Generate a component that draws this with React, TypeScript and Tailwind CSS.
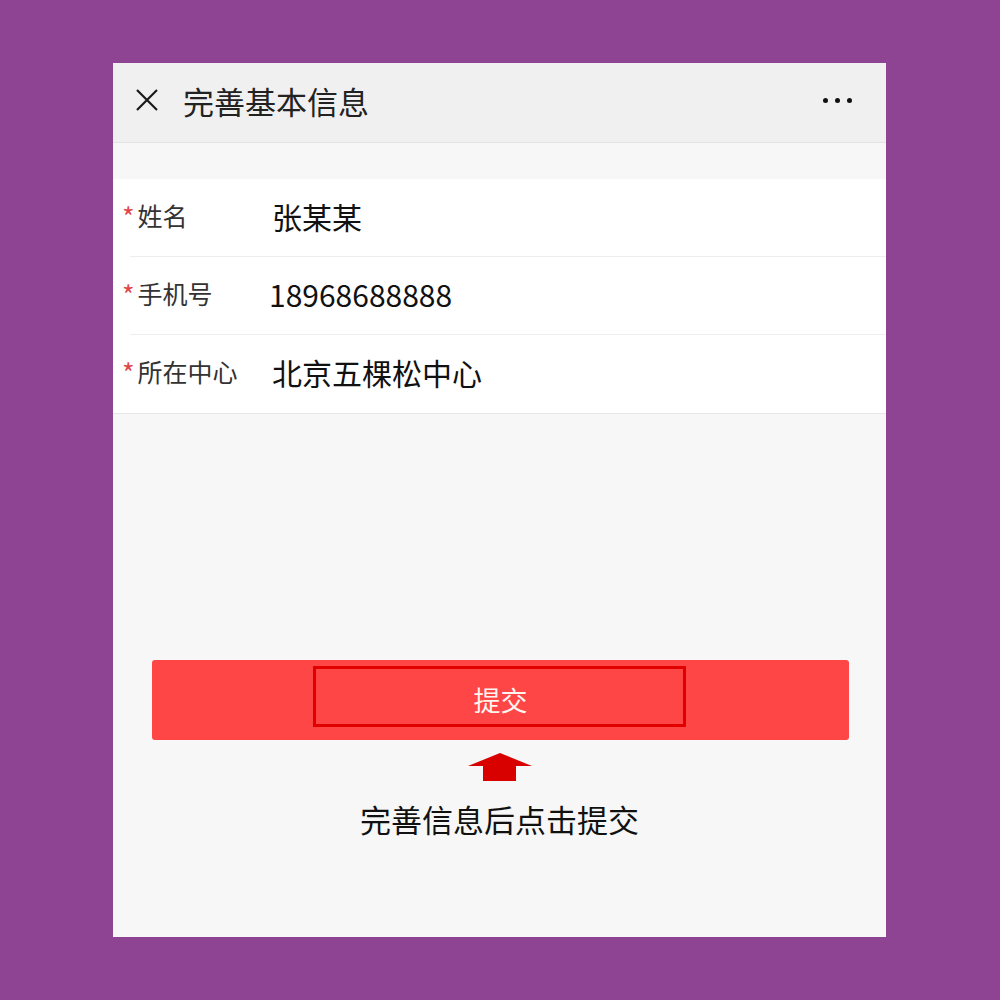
import React from "react";

const font = { fontFamily: '"Noto Sans CJK SC", "Noto Sans", sans-serif' };

function Row({ label, value, border, num }: { label: string; value: string; border: boolean; num?: boolean }) {
  return (
    <div className="relative h-[78px] flex items-center pl-[9px]">
      <div className="w-[150px] flex items-center -mt-[5px]">
        <span className="text-[#e04848] text-[27px] leading-none self-start mt-[2px] mr-[3px]">*</span>
        <span className="text-[25px] text-[#333] leading-none">{label}</span>
      </div>
      <span className={num ? "text-[30px] text-[#111] leading-none -ml-[3px] -mt-[4px]" : "text-[30px] text-[#111] leading-none -mt-[4px]"}>{value}</span>
      {border && <div className="absolute left-[17px] right-0 bottom-0 h-px bg-[#ededed]" />}
    </div>
  );
}

export default function App() {
  return (
    <div className="w-[1000px] h-[1000px] bg-[#8f4493] pt-[63px] pl-[113px]" style={font}>
      <div className="w-[773px] h-[874px] bg-[#f7f7f7] flex flex-col">
        <div className="h-[80px] bg-[#f0f0f0] border-b border-[#e3e3e3] flex items-center pl-[23px] pr-[34px] pb-[5px]">
          <svg width="22" height="22" viewBox="0 0 22 22" className="shrink-0">
            <path d="M1 1 L21 21 M21 1 L1 21" stroke="#1a1a1a" strokeWidth="2.2" fill="none" />
          </svg>
          <span className="ml-[25px] text-[31px] text-[#222] leading-none">完善基本信息</span>
          <div className="ml-auto flex gap-[7px]">
            <span className="w-[5px] h-[5px] rounded-full bg-[#111]" />
            <span className="w-[5px] h-[5px] rounded-full bg-[#111]" />
            <span className="w-[5px] h-[5px] rounded-full bg-[#111]" />
          </div>
        </div>
        <div className="h-[36px]" />
        <div className="bg-white border-b border-[#e6e6e6]">
          <Row label="姓名" value="张某某" border />
          <Row label="手机号" value="18968688888" border num />
          <Row label="所在中心" value="北京五棵松中心" border={false} />
        </div>
        <div className="mt-[246px] ml-[39px] mr-[37px] relative h-[80px] bg-[#ff4646] rounded-[3px] flex items-center justify-center">
          <span className="text-[27px] text-[#fff4f0]">提交</span>
          <div className="absolute left-[161px] top-[6px] w-[373px] h-[61px] border-[3px] border-[#e00000]" />
        </div>
        <div className="flex justify-center mt-[13px]">
          <svg width="64" height="28" viewBox="0 0 64 28">
            <path d="M32 0 L64 13 L48 13 L48 28 L15 28 L15 13 L0 13 Z" fill="#d90000" />
          </svg>
        </div>
        <div className="text-center mt-[22px] text-[31px] text-[#111] leading-none">完善信息后点击提交</div>
      </div>
    </div>
  );
}
